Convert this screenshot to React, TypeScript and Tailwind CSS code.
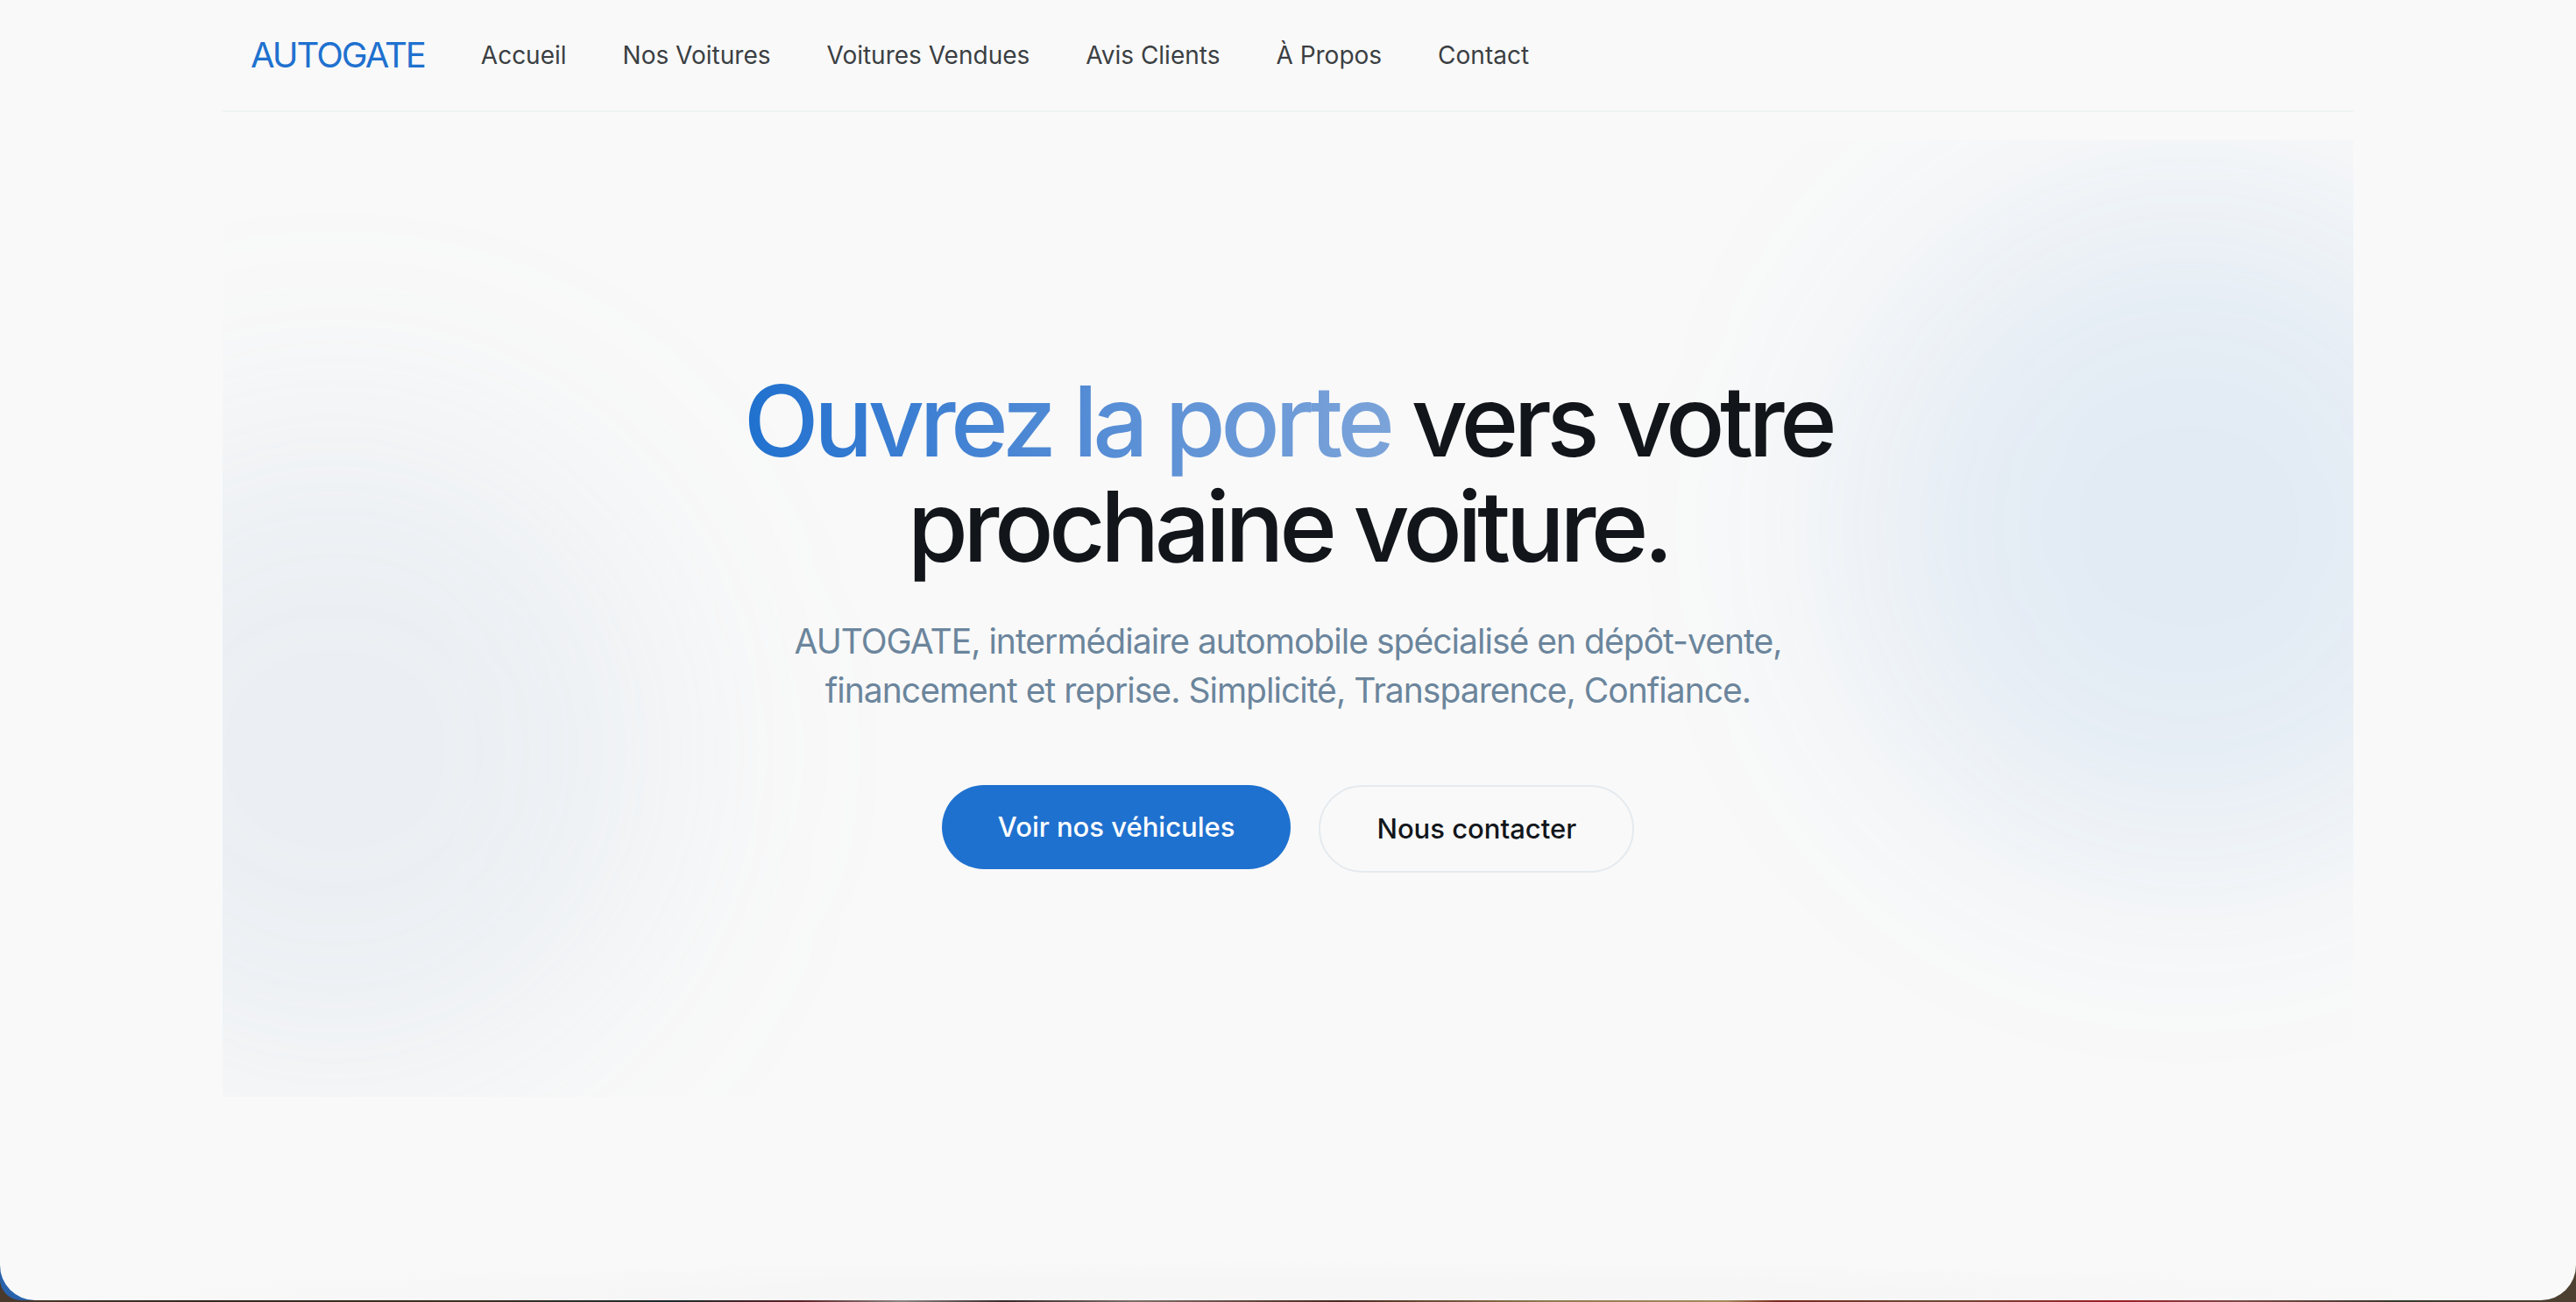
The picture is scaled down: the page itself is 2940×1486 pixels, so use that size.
const links = ["Accueil", "Nos Voitures", "Voitures Vendues", "Avis Clients", "À Propos", "Contact"];

function Header() {
  return (
    <header className="flex h-32 items-center gap-16 border-b-2 border-[#eff3f4] px-8">
      <a href="#accueil" className="text-[40px] leading-[56px] tracking-tighter text-[#1f71cf]">
        AUTOGATE
      </a>
      <nav className="flex items-center gap-16 text-[28px] leading-10 text-[#3b3f43]">
        {links.map((label) => (
          <a key={label} href="#" className="whitespace-nowrap">
            {label}
          </a>
        ))}
      </nav>
    </header>
  );
}

function Hero() {
  return (
    <section className="relative mt-8 overflow-hidden px-8 pt-65 pb-64 text-center">
      <div className="absolute top-14 -right-[196px] size-[768px] rounded-full bg-[#1f71cf]/10 blur-[128px]" />
      <div className="absolute bottom-3 -left-64 size-[768px] rounded-full bg-[#739bc4]/10 blur-[128px]" />
      <div className="relative flex flex-col items-center">
        <h1 className="max-w-[1536px] text-[112px] leading-[120px] font-medium tracking-tighter text-[#12161b]">
          <span className="bg-gradient-to-r from-[#1f71cf] to-[#7ba3d9] bg-clip-text text-transparent">
            Ouvrez la porte
          </span>{" "}
          vers votre
          <br />
          prochaine voiture.
        </h1>
        <p className="mt-11 max-w-[1280px] text-[39px] leading-[56px] tracking-tight text-[#6b859c]">
          AUTOGATE, intermédiaire automobile spécialisé en dépôt-vente,
          <br />
          financement et reprise. Simplicité, Transparence, Confiance.
        </p>
        <div className="mt-20 flex items-start justify-center gap-8 text-[31px] leading-[48px] font-medium">
          <button type="button" className="rounded-full bg-[#1f71cf] px-16 py-6 text-white">
            Voir nos véhicules
          </button>
          <button type="button" className="rounded-full border-2 border-[#e5eaee] px-16 py-6 text-[#12161b]">
            Nous contacter
          </button>
        </div>
      </div>
    </section>
  );
}

export default function App() {
  return (
    <div className="relative flex h-screen flex-col overflow-hidden bg-[linear-gradient(to_right,#4a3a2c_0%,#33271d_8%,#3c3222_18%,#1f2a2c_26%,#5b2226_31%,#8a8682_35%,#3a2a2a_39%,#7d6f68_44%,#4a2a20_52%,#8f7a50_60%,#a58a5c_67%,#7a2a1e_69%,#6b4a34_75%,#9c1f28_82%,#7a4a48_87%,#3a3a2c_93%,#4d4030_100%)] pb-[2px] font-['Inter',sans-serif]">
      <div className="absolute bottom-[2px] left-0 size-16 rounded-bl-[24px] bg-[#2862ab]" />
      <div className="relative flex-1 rounded-b-[40px] bg-[#f9f9f9]">
        <div className="absolute inset-x-0 bottom-0 h-12 rounded-b-[40px] bg-[radial-gradient(ellipse_50%_100%_at_50%_100%,#f6f6f6_0%,#f6f6f6_50%,transparent_100%)]" />
        <div className="mx-auto max-w-[2560px] px-16">
          <Header />
          <Hero />
        </div>
      </div>
    </div>
  );
}
